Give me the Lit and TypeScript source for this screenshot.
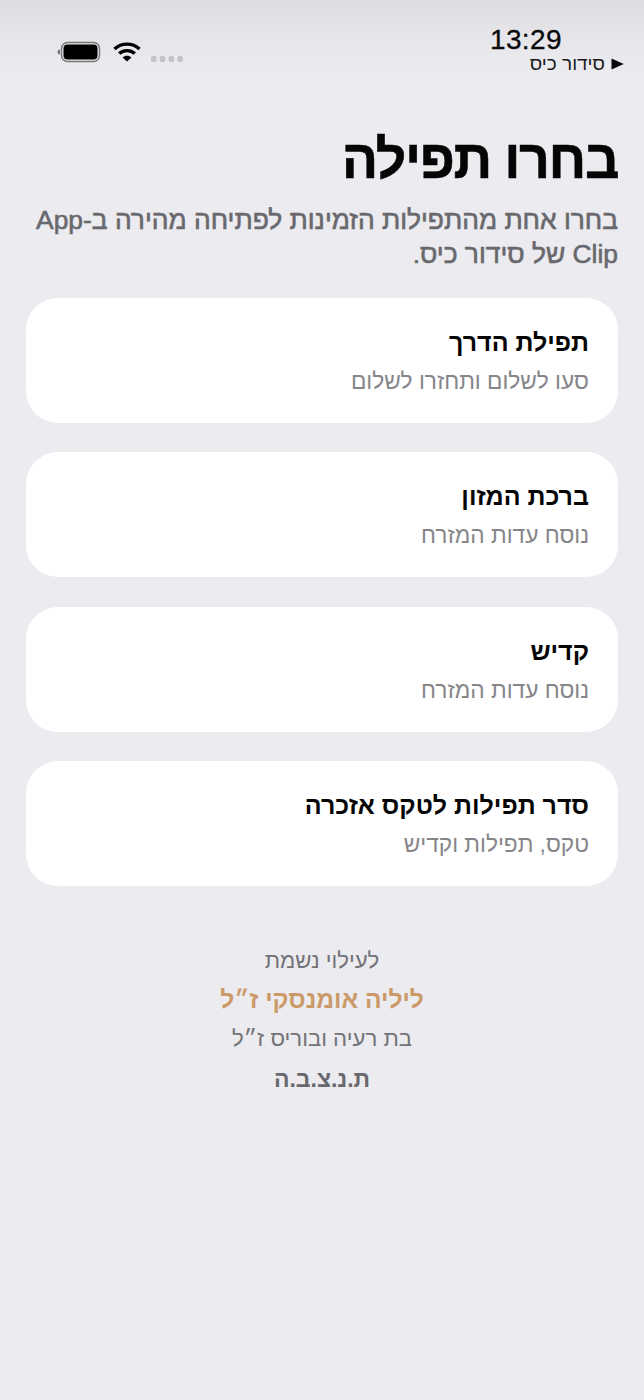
import { LitElement, css, html } from "lit";
import { customElement } from "lit/decorators.js";

const prayers = [
  { title: "תפילת הדרך", sub: "סעו לשלום ותחזרו לשלום" },
  { title: "ברכת המזון", sub: "נוסח עדות המזרח" },
  { title: "קדיש", sub: "נוסח עדות המזרח" },
  { title: "סדר תפילות לטקס אזכרה", sub: "טקס, תפילות וקדיש" },
];

@customElement("app-root")
export class AppRoot extends LitElement {
  static styles = css`
    :host {
      display: block;
      width: 644px;
      height: 1400px;
      overflow: hidden;
      background: #ebebf0;
      font-family: "Liberation Sans", Arial, sans-serif;
    }
    .page {
      direction: rtl;
      height: 1400px;
      box-sizing: border-box;
      background: linear-gradient(180deg, #dcdce0 0, #e4e4e8 28px, #e9e9ee 60px, #ebebf0 90px);
    }
    .status {
      height: 76px;
      box-sizing: border-box;
      padding: 26px 20px 0 0;
      display: flex;
      justify-content: space-between;
      align-items: flex-start;
    }
    .left-block {
      display: flex;
      flex-direction: column;
      align-items: flex-start;
    }
    .time {
      direction: ltr;
      font-size: 28px;
      line-height: 28px;
      font-weight: 400;
      color: #0a0a0c;
      margin-right: 62px;
      letter-spacing: 0.4px;
      -webkit-text-stroke: 0.3px #0a0a0c;
    }
    .crumb {
      display: flex;
      align-items: center;
      gap: 6px;
      font-size: 19px;
      line-height: 20px;
      color: #1a1a1c;
    }
    .crumb svg {
      display: block;
    }
    .icons {
      direction: ltr;
      display: flex;
      align-items: flex-start;
      order: 2;
      margin-left: 57px;
      margin-top: 15px;
    }
    .icons svg {
      display: block;
    }
    .wifi {
      margin-left: 12px;
    }
    .dots {
      margin-left: 10px;
      margin-top: 15px;
    }
    .main {
      padding: 49px 26px 0;
    }
    h1 {
      margin: 0;
      font-size: 54px;
      line-height: 68px;
      font-weight: 700;
      color: #050505;
      letter-spacing: -1.5px;
      -webkit-text-stroke: 0.5px #050505;
    }
    .lead {
      margin: 10px 0 0;
      font-size: 26.4px;
      line-height: 34px;
      font-weight: 400;
      color: #68686d;
      -webkit-text-stroke: 0.6px #68686d;
    }
    .nowrap {
      white-space: nowrap;
    }
    .list {
      margin-top: 27px;
      display: flex;
      flex-direction: column;
      gap: 29.4px;
    }
    .card {
      height: 125px;
      box-sizing: border-box;
      background: #fff;
      border-radius: 32px;
      padding: 28px 29px 0;
    }
    .card-title {
      font-size: 25px;
      line-height: 32px;
      font-weight: 700;
      color: #050505;
    }
    .card-sub {
      margin-top: 8px;
      font-size: 22.7px;
      line-height: 30px;
      color: #85858a;
    }
    .memorial {
      margin-top: 60px;
      display: flex;
      flex-direction: column;
      align-items: center;
      text-align: center;
      color: #727277;
      font-size: 22.2px;
      line-height: 30px;
    }
    .memorial div + div {
      margin-top: 9px;
    }
    .name {
      font-size: 24.5px;
      font-weight: 700;
      color: #cb9a68;
    }
    .memorial .tnzvh {
      margin-top: 10px;
      font-size: 23px;
      font-weight: 700;
      color: #68686d;
    }
  `;

  render() {
    return html`
      <div class="page">
        <div class="status">
          <div class="left-block">
            <div class="time">13:29</div>
            <div class="crumb">
              <svg width="13" height="12" viewBox="0 0 13 12"><path d="M0.5 0.5 12.8 6 0.5 11.5z" fill="#0a0a0c" /></svg>
              <span>סידור כיס</span>
            </div>
          </div>
          <div class="icons">
            <svg width="44" height="22" viewBox="0 0 44 22">
              <path d="M3 8.5a2.5 2.5 0 0 0 0 5z" fill="#77777a" />
              <rect x="4.5" y="1.5" width="38" height="19" rx="6" fill="none" stroke="#77777a" stroke-width="1.4" />
              <rect x="6.5" y="3.5" width="34" height="15" rx="4" fill="#000" />
            </svg>
            <svg class="wifi" width="28" height="21" viewBox="0 0 28 21" fill="none" stroke="#000" stroke-width="3.4">
              <path d="M1.5 8C8.5 1.5 19.5 1.5 26.5 8" />
              <path d="M6.2 12.6C10.5 8.6 17.5 8.6 21.8 12.6" />
              <path d="M14 20.5 9.6 16.4C12 14.2 16 14.2 18.4 16.4z" fill="#000" stroke="none" />
            </svg>
            <svg class="dots" width="32" height="6" viewBox="0 0 32 6" fill="#c4c4c8">
              <rect x="0" y="0" width="5.5" height="6" rx="1.8" />
              <rect x="8.8" y="0" width="5.5" height="6" rx="1.8" />
              <rect x="17.6" y="0" width="5.5" height="6" rx="1.8" />
              <rect x="26.4" y="0" width="5.5" height="6" rx="1.8" />
            </svg>
          </div>
        </div>
        <div class="main">
          <h1>בחרו תפילה</h1>
          <p class="lead">בחרו אחת מהתפילות הזמינות לפתיחה מהירה <span class="nowrap">ב-App</span> Clip של סידור כיס.</p>
          <div class="list">
            ${prayers.map(
              (p) => html`
                <div class="card">
                  <div class="card-title">${p.title}</div>
                  <div class="card-sub">${p.sub}</div>
                </div>
              `
            )}
          </div>
          <div class="memorial">
            <div>לעילוי נשמת</div>
            <div class="name">ליליה אומנסקי ז״ל</div>
            <div>בת רעיה ובוריס ז״ל</div>
            <div class="tnzvh">ת.נ.צ.ב.ה</div>
          </div>
        </div>
      </div>
    `;
  }
}
